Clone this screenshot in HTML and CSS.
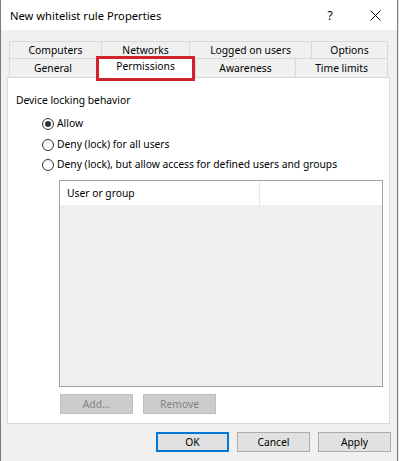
FILE: index.html
```html
<!DOCTYPE html>
<html lang="en">
<head>
    <meta charset="UTF-8">
    <title>New whitelist rule Properties</title>
    <link rel="stylesheet" href="styles.css">
</head>
<body>
    <div class="window">
        <div class="titlebar">
            <span class="title">New whitelist rule Properties</span>
            <span class="help">?</span>
            <span class="close">
                <svg width="11" height="11" viewBox="0 0 11 11">
                    <path d="M0.5 0.5 L10.5 10.5 M10.5 0.5 L0.5 10.5" stroke="#000" stroke-width="1" fill="none"/>
                </svg>
            </span>
        </div>

        <div class="tabs">
            <div class="tab-row row-top">
                <div class="tab w-computers">Computers</div>
                <div class="tab w-networks">Networks</div>
                <div class="tab w-logged">Logged on users</div>
                <div class="tab w-options last">Options</div>
            </div>
            <div class="tab-row row-bottom">
                <div class="tab w-general">General</div>
                <div class="tab w-permissions selected">Permissions</div>
                <div class="tab w-awareness">Awareness</div>
                <div class="tab w-time last">Time limits</div>
            </div>
        </div>

        <div class="panel">
            <div class="group-label">Device locking behavior</div>

            <div class="options">
                <div class="radio opt-1"><span class="circle checked"></span>Allow</div>
                <div class="radio opt-2"><span class="circle"></span>Deny (lock) for all users</div>
                <div class="radio opt-3"><span class="circle"></span>Deny (lock), but allow access for defined users and groups</div>
            </div>

            <div class="list">
                <div class="list-head">
                    <div class="col-user">User or group</div>
                    <div class="col-rest"></div>
                </div>
                <div class="list-body"></div>
            </div>

            <div class="list-buttons">
                <button class="btn" disabled>Add...</button>
                <button class="btn" disabled>Remove</button>
            </div>
        </div>

        <div class="dialog-buttons">
            <button class="btn default">OK</button>
            <button class="btn">Cancel</button>
            <button class="btn">Apply</button>
        </div>
    </div>
</body>
</html>
```

FILE: styles.css
```css
body {
    margin: 0;
    background: #e6e6e6;
    font-family: "Noto Sans", "Open Sans", sans-serif;
    font-size: 10.3px;
    color: #000;
}

.window {
    width: 398px;
    height: 461px;
    box-sizing: border-box;
    border-left: 1px solid #7a7a7a;
    border-right: 1px solid #7a7a7a;
    background: #f0f0f0;
    overflow: hidden;
}

/* title bar */
.titlebar {
    display: flex;
    align-items: center;
    height: 30px;
    background: #fff;
}

.title {
    flex: 1;
    padding-left: 9px;
    font-size: 11.2px;
}

.help {
    width: 46px;
    text-align: center;
    font-size: 12px;
}

.close {
    width: 44px;
    display: flex;
    justify-content: center;
}

/* tabs */
.tabs {
    margin: 11px 0 0 8px;
}

.tab-row {
    display: flex;
}

.row-top {
    height: 17px;
}

.row-bottom {
    height: 19px;
}

.tab {
    box-sizing: border-box;
    border-top: 1px solid #d9d9d9;
    border-left: 1px solid #d9d9d9;
    background: #f0f0f0;
    text-align: center;
}

.tab.last {
    border-right: 1px solid #d9d9d9;
}

.row-top .tab {
    height: 17px;
    line-height: 16px;
}

.row-bottom .tab {
    height: 19px;
    line-height: 19px;
}

.w-computers { width: 92px; }
.w-networks { width: 88px; }
.w-logged { width: 122px; }
.w-options { width: 77px; }
.w-general { width: 87px; }
.w-permissions { width: 99px; }
.w-awareness { width: 100px; }
.w-time { width: 93px; }

.row-bottom .tab.selected {
    position: relative;
    z-index: 2;
    height: 25px;
    margin-top: -2px;
    border: 3px solid #d1232a;
    background: #fff;
    line-height: 15px;
}

/* page */
.panel {
    margin-left: 6px;
    width: 383px;
    height: 347px;
    box-sizing: border-box;
    border: 1px solid #d9d9d9;
    background: #fff;
    padding: 15px 0 0 8px;
}

.group-label {
    line-height: 15px;
}

.options {
    margin-left: 26px;
}

.radio {
    display: flex;
    align-items: center;
    height: 15px;
    line-height: 15px;
}

.opt-1 { margin-top: 8px; }
.opt-2 { margin-top: 6px; }
.opt-3 { margin-top: 5px; }

.circle {
    width: 12px;
    height: 12px;
    box-sizing: border-box;
    border: 1px solid #333;
    border-radius: 50%;
    margin-right: 3px;
    display: flex;
    align-items: center;
    justify-content: center;
}

.circle.checked::after {
    content: "";
    width: 6px;
    height: 6px;
    border-radius: 50%;
    background: #333;
}

.list {
    margin: 8px 0 0 43px;
    width: 324px;
    height: 207px;
    box-sizing: border-box;
    border: 1px solid #a0a0a0;
    background: #f0f0f0;
    display: flex;
    flex-direction: column;
}

.list-head {
    display: flex;
    height: 24px;
    background: #fff;
}

.col-user {
    width: 200px;
    box-sizing: border-box;
    border-right: 1px solid #e5e5e5;
    padding-left: 7px;
    line-height: 24px;
}

.col-rest {
    flex: 1;
}

.list-buttons {
    display: flex;
    gap: 10px;
    margin: 7px 0 0 44px;
}

/* buttons */
.btn {
    width: 73px;
    height: 20px;
    box-sizing: border-box;
    border: 1px solid #adadad;
    background: #e1e1e1;
    font-family: inherit;
    font-size: 10.3px;
    color: #000;
    padding: 0;
}

.btn:disabled {
    border-color: #bfbfbf;
    background: #cccccc;
    color: #838383;
}

.btn.default {
    border: 2px solid #0078d7;
}

.dialog-buttons {
    display: flex;
    justify-content: flex-end;
    gap: 8px;
    margin: 8px 6px 0 0;
}
```
